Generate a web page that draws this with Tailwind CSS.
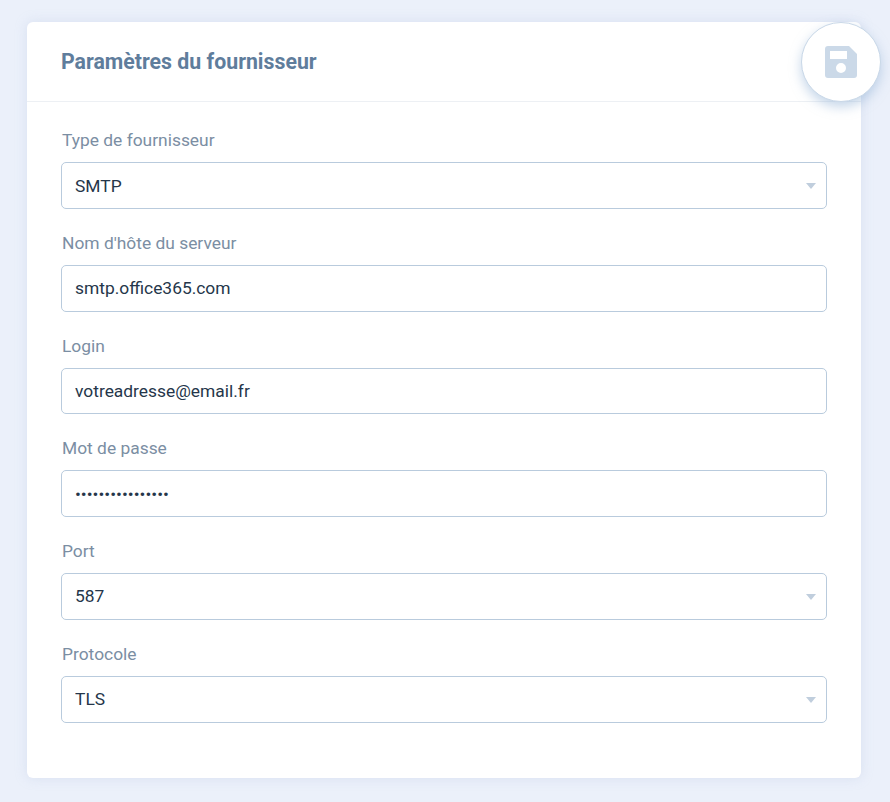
<!DOCTYPE html>
<html lang="fr">
<head>
<meta charset="utf-8">
<title>Paramètres du fournisseur</title>
<script src="https://cdn.jsdelivr.net/npm/@tailwindcss/browser@4"></script>
</head>
<body class="bg-[#ebf0fa] font-['Roboto',sans-serif]">
<div class="h-[802px] overflow-hidden pt-[22px] pl-[27px]">
  <div class="relative w-[834px] h-[756px] bg-white rounded-md shadow-[0_0_12px_rgba(180,195,225,0.35)]">

    <div class="h-[80px] border-b border-[#edf0f4] flex items-center pl-[34px]">
      <h2 class="text-[21.3px] font-bold text-[#5f7d9c]">Paramètres du fournisseur</h2>
    </div>

    <!-- save button -->
    <button class="absolute top-0 right-[-20px] w-[80px] h-[80px] rounded-full bg-white border border-[#c9d8e8] shadow-[0_5px_12px_rgba(150,180,215,0.55)] flex items-center justify-center">
      <svg class="w-[32px] h-[32px]" viewBox="0 0 32 32" fill="#cbd9e8">
        <path fill-rule="evenodd" d="M3 0h21l8 8v21a3 3 0 0 1-3 3H3a3 3 0 0 1-3-3V3a3 3 0 0 1 3-3zM5 5v8h17V5zM16 17a5 5 0 1 0 0 10a5 5 0 0 0 0-10z"/>
      </svg>
    </button>

    <form class="pt-[28px] pl-[34px] w-[800px]">
      <div class="mb-[24px]">
        <label class="block h-[20px] leading-[20px] mb-[12px] text-[17.4px] text-[#7b8ea3] pl-px">Type de fournisseur</label>
        <div class="relative">
          <select class="w-full h-[46.8px] pl-[13px] pr-[13px] pt-px appearance-none bg-white border border-[#b9cbdd] rounded-[5px] text-[17.4px] text-[#25364a]"><option>SMTP</option></select>
          <span class="absolute right-[11px] top-[21px] w-0 h-0 border-x-[5px] border-x-transparent border-t-[6px] border-t-[#c0cedd]"></span>
        </div>
      </div>
      <div class="mb-[24px]">
        <label class="block h-[20px] leading-[20px] mb-[12px] text-[17.4px] text-[#7b8ea3] pl-px">Nom d'hôte du serveur</label>
        <input type="text" value="smtp.office365.com" class="w-full h-[46.8px] px-[13px] bg-white border border-[#b9cbdd] rounded-[5px] text-[17.4px] text-[#25364a]">
      </div>
      <div class="mb-[24px]">
        <label class="block h-[20px] leading-[20px] mb-[12px] text-[17.4px] text-[#7b8ea3] pl-px">Login</label>
        <input type="text" value="votreadresse@email.fr" class="w-full h-[46.8px] px-[13px] bg-white border border-[#b9cbdd] rounded-[5px] text-[17.4px] text-[#25364a]">
      </div>
      <div class="mb-[24px]">
        <label class="block h-[20px] leading-[20px] mb-[12px] text-[17.4px] text-[#7b8ea3] pl-px">Mot de passe</label>
        <input type="password" value="motdepasse123456" class="w-full h-[46.8px] px-[13px] bg-white border border-[#b9cbdd] rounded-[5px] text-[17.4px] text-[#25364a]">
      </div>
      <div class="mb-[24px]">
        <label class="block h-[20px] leading-[20px] mb-[12px] text-[17.4px] text-[#7b8ea3] pl-px">Port</label>
        <div class="relative">
          <select class="w-full h-[46.8px] pl-[13px] pr-[13px] pb-[2px] appearance-none bg-white border border-[#b9cbdd] rounded-[5px] text-[17.4px] text-[#25364a]"><option>587</option></select>
          <span class="absolute right-[11px] top-[21px] w-0 h-0 border-x-[5px] border-x-transparent border-t-[6px] border-t-[#c0cedd]"></span>
        </div>
      </div>
      <div>
        <label class="block h-[20px] leading-[20px] mb-[12px] text-[17.4px] text-[#7b8ea3] pl-px">Protocole</label>
        <div class="relative">
          <select class="w-full h-[46.8px] pl-[13px] pr-[13px] appearance-none bg-white border border-[#b9cbdd] rounded-[5px] text-[17.4px] text-[#25364a]"><option>TLS</option></select>
          <span class="absolute right-[11px] top-[21px] w-0 h-0 border-x-[5px] border-x-transparent border-t-[6px] border-t-[#c0cedd]"></span>
        </div>
      </div>
    </form>
  </div>
</div>
</body>
</html>
